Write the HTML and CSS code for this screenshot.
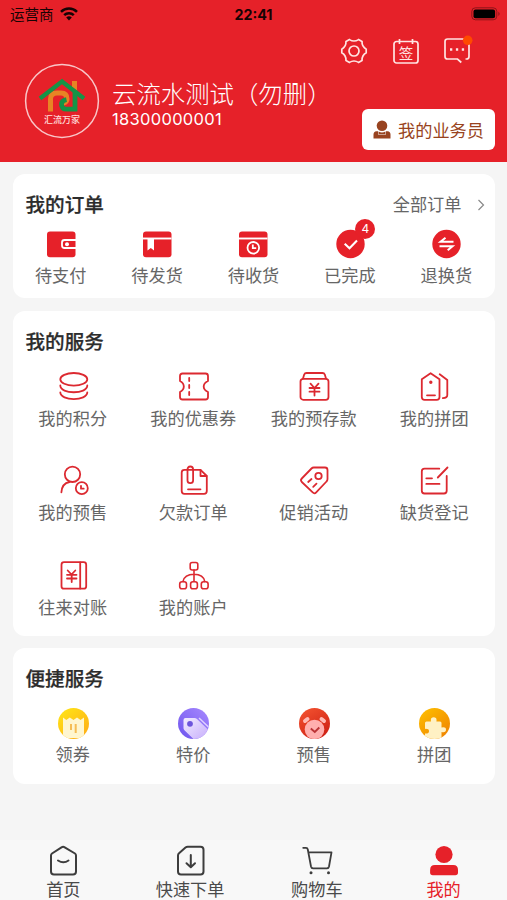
FILE: index.html
```html
<!DOCTYPE html>
<html lang="zh-CN">
<head>
<meta charset="utf-8">
<title>我的</title>
<link rel="stylesheet" href="styles.css">
</head>
<body>
<header class="header">
  <div class="status">
    <div class="carrier">运营商
      <svg class="wifi" width="18" height="14" viewBox="0 0 18 14"><g fill="none" stroke="#160304" stroke-width="2.5"><path d="M1 4.9a11.3 11.3 0 0 1 16 0"/><path d="M4.2 8.2a6.8 6.8 0 0 1 9.6 0"/></g><path d="M9 13.4 6.2 10.5a4 4 0 0 1 5.6 0z" fill="#160304"/></svg>
    </div>
    <div class="time">22:41</div>
    <svg class="battery" width="30" height="14" viewBox="0 0 30 14"><rect x=".8" y=".8" width="25" height="12" rx="3.6" fill="none" stroke="#8d1419" stroke-width="1"/><rect x="2.5" y="2.4" width="21.6" height="8.8" rx="2" fill="#000"/><path d="M27.4 4.7q2.4 2.1 0 4.2z" fill="#8d1419"/></svg>
  </div>
  <div class="profile">
    <svg class="avatar" width="76" height="76" viewBox="0 0 76 76">
      <circle cx="38" cy="38" r="36.4" fill="none" stroke="#f9c6c8" stroke-width="1.5"/>
      <path d="M48 26V18h5v12z" fill="#e88424"/>
      <path d="M26.500 48.500V36q0-6 6.500-6h4q6 0 6 6 0 3-3.500 4" fill="none" stroke="#e88424" stroke-width="5"/>
      <path d="M16 35.500 38 18.500 60 35.500" fill="none" stroke="#159447" stroke-width="4.200"/>
      <path d="M51 29V46.200H43q-5.500 0-5.500-5 0-3.500 5-4.500" fill="none" stroke="#159447" stroke-width="4.800"/>
      <text x="38" y="59.800" text-anchor="middle" class="logo-text">汇流万家</text>
    </svg>
    <div class="details">
      <div class="actions">
        <svg width="32" height="32" viewBox="0 0 32 32" class="line-white"><path d="M11.500 4.600Q16 7.400 20.500 4.600L24 6.500Q23.800 11.600 28.200 14.200V17.800Q23.800 20.400 24 25.500L20.500 27.400Q16 24.600 11.500 27.400L8 25.500Q8.200 20.400 3.800 17.800V14.200Q8.200 11.600 8 6.500Z"/><circle cx="16" cy="16" r="5"/></svg>
        <svg width="32" height="32" viewBox="0 0 32 32" class="line-white"><rect x="4" y="6.500" width="24" height="21.500" rx="2.500"/><path d="M9.500 4v5M22.500 4v5"/><text x="16" y="23.500" text-anchor="middle" class="sign">签</text></svg>
        <svg width="32" height="32" viewBox="0 0 32 32" class="line-white"><path d="M24.500 24H25.500q2.500 0 2.500-2.500V6.500Q28 4 25.500 4H6.500Q4 4 4 6.500v15Q4 24 6.500 24H16.500l3.800 3.500"/><path d="M9 14.500h2.300M14.900 14.500h2.300M20.800 14.500h2.300" stroke-width="2.300"/><circle cx="26.700" cy="5.300" r="4.800" fill="#ff4a00" stroke="none"/></svg>
      </div>
      <div class="identity">
        <div>
          <div class="name">云流水测试（勿删）</div>
          <div class="phone">18300000001</div>
        </div>
        <div class="agent">
          <svg width="18" height="19" viewBox="0 0 18 19"><circle cx="9" cy="5.700" r="5.300" fill="#984320"/><path d="M.5 18.500V14.500q0-3 3-3.200H5v3.200h8v-3.200h1.500q3 .2 3 3.200v4z" fill="#984320"/><path d="M5.500 11.500q3.500 2 7 0V14h-7z" fill="#984320"/></svg>
          <span>我的业务员</span>
        </div>
      </div>
    </div>
  </div>
</header>

<main class="content">
  <section class="card orders">
    <div class="card-head"><h2>我的订单</h2><div class="more">全部订单<svg width="8" height="12" viewBox="0 0 8 12"><path d="m1.500 1 5 5-5 5" fill="none" stroke="#888" stroke-width="1.200"/></svg></div></div>
    <div class="grid five">
      <div class="item"><svg width="32" height="32" viewBox="0 0 32 32"><rect x="2" y="3.500" width="28.500" height="25.700" rx="3" fill="#e62129"/><path d="M31 12H19.500q-2.500 0-2.500 2.500v3q0 2.500 2.500 2.500H31" fill="none" stroke="#fff" stroke-width="1.800"/><circle cx="22" cy="16.200" r="2" fill="#fff"/></svg><span>待支付</span></div>
      <div class="item"><svg width="32" height="32" viewBox="0 0 32 32"><rect x="2" y="3.500" width="28.500" height="25.700" rx="3" fill="#e62129"/><path d="M2 10.500h28.500" stroke="#fff" stroke-width="1.900"/><path d="M6.500 11h6.500v11.500l-3.200-2.500-3.300 2.500z" fill="#fff"/></svg><span>待发货</span></div>
      <div class="item"><svg width="32" height="32" viewBox="0 0 32 32"><rect x="2" y="3.500" width="28.500" height="25.700" rx="3" fill="#e62129"/><path d="M2 10.500h28.500" stroke="#fff" stroke-width="1.900"/><g fill="none" stroke="#fff" stroke-width="1.800"><circle cx="16.300" cy="19.800" r="5.800"/><path d="M15.800 16.500v3.700h3.400"/></g></svg><span>待收货</span></div>
      <div class="item"><div class="badged"><svg width="32" height="32" viewBox="0 0 32 32"><circle cx="16.500" cy="16" r="14.200" fill="#e62129"/><path d="m10.700 15.800 4.800 4.500 7.500-7.800" fill="none" stroke="#fff" stroke-width="2.100"/></svg><b class="badge">4</b></div><span>已完成</span></div>
      <div class="item"><svg width="32" height="32" viewBox="0 0 32 32"><circle cx="16.500" cy="16" r="14.200" fill="#e62129"/><path d="M23.500 13.700H10.500L15.500 9.700M9.500 18.300h13L17.700 22.300" fill="none" stroke="#fff" stroke-width="2"/></svg><span>退换货</span></div>
    </div>
  </section>

  <section class="card services">
    <div class="card-head"><h2>我的服务</h2></div>
    <div class="grid four">
      <div class="item"><svg width="32" height="32" viewBox="0 0 32 32" class="line-red"><ellipse cx="16.800" cy="8.300" rx="13.500" ry="6.300"/><path d="M3.300 14.500c0 9 27 9 27 0M3.300 21.300c0 9 27 9 27 0"/></svg><span>我的积分</span></div>
      <div class="item"><svg width="32" height="32" viewBox="0 0 32 32" class="line-red"><path d="M5.500 2.500H28.500Q31 2.500 31 5V10q-4.300 2-4.300 5.500T31 21v5q0 2.500-2.500 2.500H5.500Q3 28.500 3 26V21q3.800-2 3.800-5.500T3 10V5Q3 2.500 5.500 2.500Z"/><path d="M12.200 7v3M12.200 14v3M12.200 21v3" /></svg><span>我的优惠券</span></div>
      <div class="item"><svg width="32" height="32" viewBox="0 0 32 32" class="line-red"><path d="M5 7.500 6.200 3.500Q6.800 2 8.500 2H24.500q1.700 0 2.300 1.500L28 7.500"/><rect x="2.500" y="7.800" width="28" height="21" rx="2.800"/><path d="m12.500 12.700 4 4.300 4-4.300M11.500 17h10M11.500 20.700h10M16.500 17v7.500"/></svg><span>我的预存款</span></div>
      <div class="item"><svg width="32" height="32" viewBox="0 0 32 32" class="line-red"><path d="M12.600 2.200 21.500 8.200V26q0 2.800-2.800 2.800H6.600Q3.800 28.800 3.800 26V8.200Z"/><path d="M21.700 3.300 29.300 9V24q0 3-4.500 3.100M9 24.300h8"/><circle cx="12.800" cy="11.200" r=".8"/></svg><span>我的拼团</span></div>
      <div class="item"><svg width="32" height="32" viewBox="0 0 32 32" class="line-red"><circle cx="15.500" cy="9.300" r="7.700"/><path d="M4.400 27.300Q4.900 18.500 12.500 17"/><circle cx="24.800" cy="23.200" r="6"/><path d="M24 20.800v2.900h2.700"/></svg><span>我的预售</span></div>
      <div class="item"><svg width="32" height="32" viewBox="0 0 32 32" class="line-red"><path d="M17 4.800H23.500L29.800 11V26q0 2.800-2.800 2.800H7.500Q4.700 28.800 4.700 26V7.600Q4.700 4.800 7.500 4.800H16"/><path d="M23.500 5v6h6M11 24.300h12.500M10.500 10V4.500q0-3 2.800-3t2.800 3V15.500q0 2.700-2.800 2.700t-2.800-2.700V9"/></svg><span>欠款订单</span></div>
      <div class="item"><svg width="32" height="32" viewBox="0 0 32 32" class="line-red"><path d="M15.800 2.500H27Q29.500 2.500 29.500 5V14q0 1.500-1 2.500L18.200 27.400q-1.700 1.800-3.500 0L3.800 17q-1.700-1.800 0-3.500L13.500 3.500q1-1 2.300-1Z"/><circle cx="20.500" cy="11" r="3.200"/><path d="m10.200 17 3.300-3M15.200 21.800l3.300-3.200"/></svg><span>促销活动</span></div>
      <div class="item"><svg width="32" height="32" viewBox="0 0 32 32" class="line-red"><path d="M21.300 3.700H6.500Q3.800 3.700 3.800 6.400V25.800q0 2.700 2.700 2.700H26q2.700 0 2.700-2.700V11"/><path d="m29.500 2.500-9.700 10M8.300 13.300H14M8.300 18.900h13.200"/></svg><span>缺货登记</span></div>
      <div class="item"><svg width="32" height="32" viewBox="0 0 32 32" class="line-red"><rect x="4.500" y="2.200" width="24.700" height="26.500" rx="2.500"/><path d="M23.200 2.500v26m-12.500-18 3.800 4 3.800-4M10 14.800h9.500M10 18.500h9.500M14.700 14.500V22"/></svg><span>往来对账</span></div>
      <div class="item"><svg width="32" height="32" viewBox="0 0 32 32" class="line-red thin"><rect x="13.200" y="2.500" width="7.600" height="7.500" rx="2"/><path d="M17 10v11.500M6 21.500Q7.500 14.300 17 14.300t10.700 7.200"/><rect x="2.700" y="21.700" width="6.800" height="7" rx="2.300"/><rect x="13.600" y="21.700" width="6.800" height="7" rx="2.300"/><rect x="24.300" y="21.700" width="6.800" height="7" rx="2.300"/></svg><span>我的账户</span></div>
    </div>
  </section>

  <section class="card quick">
    <div class="card-head"><h2>便捷服务</h2></div>
    <div class="grid four">
      <div class="item"><svg width="32" height="32" viewBox="0 0 32 32"><defs><linearGradient id="gy" x1="0" y1="0" x2=".8" y2="1"><stop stop-color="#ffea16"/><stop offset="1" stop-color="#ffac17"/></linearGradient><linearGradient id="gp" x1="1" y1="0" x2="0" y2="1"><stop stop-color="#a98bff"/><stop offset="1" stop-color="#6c52ed"/></linearGradient><linearGradient id="gr" x1="0" y1="0" x2=".6" y2="1"><stop stop-color="#f75732"/><stop offset="1" stop-color="#ce2115"/></linearGradient><linearGradient id="go" x1="0" y1="0" x2=".8" y2="1"><stop stop-color="#ffc400"/><stop offset="1" stop-color="#ef8200"/></linearGradient><linearGradient id="pp" x1="0" y1="0" x2="1" y2="1"><stop stop-color="#f2ecff"/><stop offset="1" stop-color="#c2a7fb"/></linearGradient><clipPath id="disc"><circle cx="16.500" cy="16.500" r="15.500"/></clipPath></defs><g clip-path="url(#disc)"><path d="M0 0h33v33H0z" fill="url(#gy)"/><path d="M6 10.500 9.300 13l3.500-2.500L16.500 13l3.500-2.500 3.500 2.500 3.500-2.500V27q0 3-3 4H9q-3-1-3-4z" fill="#fff6cf"/><path d="M14 17v6M18.700 17v9" stroke="#f5bd55" stroke-width="2" fill="none"/></g></svg><span>领券</span></div>
      <div class="item"><svg width="32" height="32" viewBox="0 0 32 32"><g clip-path="url(#disc)"><path d="M0 0h33v33H0z" fill="url(#gp)"/><path d="M6.500 13q0-2 2-2h9q1.500 0 2.500 1L33 24.500v10H19L7.200 23q-.7-.8-.7-2z" fill="url(#pp)"/><path d="m22 11 10 9.500" stroke="#e0d2ff" stroke-width="1.500"/><circle cx="13" cy="16.800" r="2.900" fill="#6d55dc"/></g></svg><span>特价</span></div>
      <div class="item"><svg width="32" height="32" viewBox="0 0 32 32"><g clip-path="url(#disc)"><path d="M0 0h33v33H0z" fill="url(#gr)"/><circle cx="16.500" cy="22.500" r="9.800" fill="#ffafae"/><path d="m7 14 2.500-2M26 14l-2.500-2" stroke="#ffb9b4" stroke-width="4" stroke-linecap="round"/><path d="m12.800 21.500 4 3.500 4.500-4.500" fill="none" stroke="#bb3436" stroke-width="1.900"/></g></svg><span>预售</span></div>
      <div class="item"><svg width="32" height="32" viewBox="0 0 32 32"><g clip-path="url(#disc)"><path d="M0 0h33v33H0z" fill="url(#go)"/><path d="M8.500 14.500H13q-.8-4.300 2.700-4.300t2.700 4.300H22q1.500 0 1.500 1.500v4.500q4.500-1 4.500 2.200t-4.500 2.300V33H7v-6.500q4 .3 4-2.300t-4-2.300V16q0-1.500 1.500-1.500Z" fill="#fff1c4"/></g></svg><span>拼团</span></div>
    </div>
  </section>
</main>

<nav class="tabs">
  <div class="tab"><svg width="32" height="32" viewBox="0 0 32 32" class="line-dark"><path d="M14.500 3.300q1.600-1 3.200 0L28 9.500q1 .7 1 2V27.500q0 3-3 3H7q-3 0-3-3V11.500q0-1.300 1-2Z"/><path d="M11 16.500q5.500 3.500 10.500 0"/></svg><span>首页</span></div>
  <div class="tab"><svg width="32" height="32" viewBox="0 0 32 32" class="line-dark"><path d="M13.700 2.700H26.500q3 0 3 3V27.500q0 3-3 3H7q-3 0-3-3V11.500q0-1.500 1-2.300L11.500 3.500q1-.8 2.200-.8Z"/><path d="M16.800 11v12M12.500 19.300l4.300 4 4.200-4"/></svg><span>快速下单</span></div>
  <div class="tab"><svg width="32" height="32" viewBox="0 0 32 32" class="line-dark cart"><path d="M2.200 3.800H5Q6.500 3.800 6.800 5.500L10 22.500q.4 1.800 2 1.800H26q1.600 0 2-1.800L30.500 8.300H7.500"/><circle cx="10" cy="28.800" r="1.500" fill="#3d3d3d" stroke="none"/><circle cx="27.500" cy="28.800" r="1.500" fill="#3d3d3d" stroke="none"/></svg><span>购物车</span></div>
  <div class="tab active"><svg width="32" height="32" viewBox="0 0 32 32" fill="#e62129"><circle cx="16" cy="10.500" r="8.600"/><path d="M6.800 21H25.300q4.700 0 4.700 5v2.500q0 2.700-2.700 2.700H4.800q-2.700 0-2.700-2.700V26q0-5 4.700-5Z"/></svg><span>我的</span></div>
</nav>
</body>
</html>
```
FILE: styles.css
```css
* { box-sizing: border-box; }

body {
  margin: 0;
  height: 900px;
  display: flex;
  flex-direction: column;
  overflow: hidden;
  background: #f5f5f5;
  color: #666;
  font-family: "Inter", "Noto Sans CJK SC", sans-serif;
}

svg { display: block; flex: none; }

.header {
  height: 162px;
  background: #e62129;
}

.status {
  height: 28px;
  padding: 0 6px 0 10px;
  display: grid;
  grid-template-columns: 1fr auto 1fr;
  align-items: center;
  color: #160304;
}

.carrier {
  display: flex;
  align-items: center;
  gap: 6px;
  font-size: 14.5px;
  line-height: 29px;
}

.wifi { margin-top: -2px; }
.time { padding-right: 4px; font-size: 14.3px; font-weight: 700; line-height: 28px; }
.battery { justify-self: end; margin-top: -2px; }

.profile {
  display: flex;
  padding: 7px 12px 0 24px;
}

.avatar { margin-top: 28px; }

.logo-text {
  font-size: 9px;
  font-family: "Noto Sans CJK SC", sans-serif;
  font-weight: 500;
  fill: #ffdedb;
}

.details {
  flex: 1;
  padding-left: 12px;
}

.actions {
  display: flex;
  justify-content: flex-end;
  gap: 19.5px;
  padding-right: 22px;
}

.line-white {
  fill: none;
  stroke: #ffe4e2;
  stroke-width: 1.7;
}

.sign {
  font-size: 14.5px;
  font-family: "Noto Sans CJK SC", sans-serif;
  fill: #ffe4e2;
  stroke: none;
}

.identity {
  display: flex;
  justify-content: space-between;
  margin-top: 12px;
  color: #fff;
  white-space: nowrap;
}

.name { width: 240px; font-size: 24.4px; font-weight: 300; line-height: 30px; }
.phone { font-size: 16.5px; line-height: 20px; letter-spacing: .3px; }

.agent {
  width: 133px;
  height: 41px;
  margin: 30px 0 0 -20px;
  padding-left: 11px;
  display: flex;
  align-items: center;
  gap: 7px;
  border-radius: 6px;
  background: #fff;
  color: #984320;
  font-size: 17.2px;
}

.content {
  flex: 1;
  display: flex;
  flex-direction: column;
  gap: 12.5px;
  padding: 12px 12.5px 0;
}

.card {
  border-radius: 12px;
  background: #fff;
}

.orders { height: 124px; }
.services { height: 325px; }
.quick { height: 136px; }

.card-head {
  height: 60px;
  padding: 2px 10px 0 13px;
  display: flex;
  align-items: center;
  justify-content: space-between;
}

h2 {
  margin: 0;
  color: #2c2c2c;
  font-size: 19.6px;
  font-weight: 500;
  line-height: 24px;
  -webkit-text-stroke: .25px #2c2c2c;
}

.more {
  display: flex;
  align-items: center;
  gap: 15px;
  font-size: 17.2px;
  line-height: 24px;
}

.grid { display: grid; }
.five { grid-template-columns: repeat(5, 1fr); margin-top: -6px; }
.four { grid-template-columns: repeat(4, 1fr); grid-auto-rows: 94.5px; }
.quick .four { margin-top: -1px; }

.item {
  display: flex;
  flex-direction: column;
  align-items: center;
  font-size: 17.2px;
  line-height: 24px;
  white-space: nowrap;
}

.item span { margin-top: 4px; }

.badged { position: relative; }

.badge {
  position: absolute;
  left: 21.5px;
  top: -9px;
  width: 20px;
  height: 20px;
  border-radius: 50%;
  background: #e62129;
  color: #fff;
  font-size: 12px;
  font-weight: 400;
  line-height: 20px;
  text-align: center;
}

.line-red {
  fill: none;
  stroke: #dc2930;
  stroke-width: 1.8;
  stroke-linecap: round;
  stroke-linejoin: round;
}

.thin { stroke-width: 1.6; }

.tabs {
  height: 60px;
  padding-top: 4px;
  display: grid;
  grid-template-columns: repeat(4, 1fr);
  background: #f8f8f8;
  color: #4a4a4a;
}

.tab {
  display: flex;
  flex-direction: column;
  align-items: center;
  font-size: 17.2px;
  line-height: 24px;
}

.tab span { margin-top: 2px; }
.active { color: #e62129; }

.line-dark {
  fill: none;
  stroke: #3d3d3d;
  stroke-width: 2;
  stroke-linecap: round;
  stroke-linejoin: round;
}

.cart { stroke-width: 1.8; }
```
